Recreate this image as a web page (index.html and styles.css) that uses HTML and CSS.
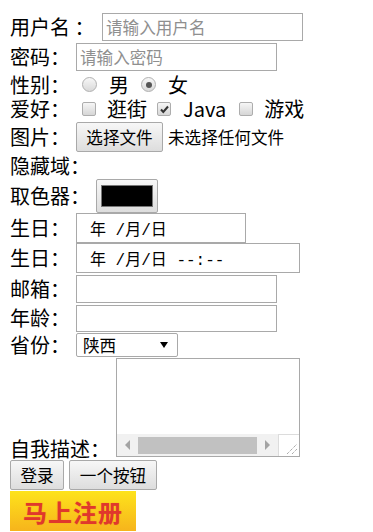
FILE: index.html
```html
<!DOCTYPE html>
<html lang="zh-CN">
<head>
    <meta charset="UTF-8">
    <meta name="viewport" content="width=device-width, initial-scale=1.0">
    <title>注册</title>
    <link rel="stylesheet" href="styles.css">
</head>
<body>
    <form class="reg">
        <div class="row r1">
            <span class="lbl w-user">用户名 ：</span>
            <input class="txt" type="text" placeholder="请输入用户名">
        </div>
        <div class="row r2">
            <span class="lbl">密码：</span>
            <input class="txt" type="text" placeholder="请输入密码">
        </div>
        <div class="row r3">
            <span class="lbl">性别：</span>
            <span class="radio"></span><span class="opt">男</span>
            <span class="radio on"></span><span class="opt">女</span>
        </div>
        <div class="row r4">
            <span class="lbl">爱好：</span>
            <span class="check"></span><span class="opt o1">逛街</span>
            <span class="check on c2"><svg width="11" height="11" viewBox="0 0 11 11"><path d="M2 5.5 L4.3 8 L9 2.5" fill="none" stroke="#333" stroke-width="2"/></svg></span><span class="opt o2">Java</span>
            <span class="check c3"></span><span class="opt o3">游戏</span>
        </div>
        <div class="row r5">
            <span class="lbl">图片：</span>
            <span class="btn file-btn">选择文件</span>
            <span class="file-name">未选择任何文件</span>
        </div>
        <div class="row r6">
            <span class="lbl">隐藏域：</span>
        </div>
        <div class="row r7">
            <span class="lbl w-color">取色器：</span>
            <span class="color"><span class="swatch"></span></span>
        </div>
        <div class="row r8">
            <span class="lbl">生日：</span>
            <span class="date">年 /月/日</span>
        </div>
        <div class="row r9">
            <span class="lbl">生日：</span>
            <span class="date wide">年 /月/日 --:--</span>
        </div>
        <div class="row r10">
            <span class="lbl">邮箱：</span>
            <input class="txt" type="text">
        </div>
        <div class="row r11">
            <span class="lbl">年龄：</span>
            <input class="txt short" type="text">
        </div>
        <div class="row r12">
            <span class="lbl">省份：</span>
            <span class="select">陕西<span class="caret"></span></span>
        </div>
        <div class="row r13">
            <span class="lbl w-desc">自我描述：</span>
            <div class="area">
                <div class="area-body"></div>
                <div class="hbar">
                    <span class="arr"><span class="tri left"></span></span>
                    <span class="track"><span class="thumb"></span></span>
                    <span class="arr"><span class="tri right"></span></span>
                    <span class="corner">
                        <svg width="21" height="22" viewBox="0 0 21 22"><path d="M9 20 L19 10 M14 20 L19 15" stroke="#888" stroke-width="1" stroke-dasharray="1 1"/></svg>
                    </span>
                </div>
            </div>
        </div>
        <div class="row r14">
            <span class="btn login">登录</span>
            <span class="btn other">一个按钮</span>
        </div>
        <div class="row r15">
            <span class="banner">马上注册</span>
        </div>
    </form>
</body>
</html>
```

FILE: styles.css
```css
body {
    margin: 0;
    padding: 12px 0 0 10px;
    font-family: "Noto Sans CJK SC", "Noto Sans", sans-serif;
    color: #000;
    background: #fff;
}

.row {
    display: flex;
    align-items: center;
}

.r1 { height: 30px; }
.r2 { height: 30px; }
.r3 { height: 25px; }
.r4 { height: 24px; }
.r5 { height: 32px; }
.r6 { height: 26px; }
.r7 { height: 34px; }
.r8 { height: 30px; }
.r9 { height: 30px; }
.r10 { height: 31px; }
.r11 { height: 28px; }
.r12 { height: 25px; }
.r13 { height: 103px; align-items: flex-end; }
.r14 { height: 31px; align-items: flex-start; }
.r15 { height: 40px; }

.lbl {
    flex-shrink: 0;
    width: 66px;
    font-size: 20px;
    line-height: 20px;
    white-space: pre;
}

.w-user { width: 92px; }
.w-color { width: 86px; }
.w-desc { width: 106px; margin-bottom: 1px; }

.txt {
    box-sizing: border-box;
    width: 201px;
    height: 28px;
    margin: 0;
    padding: 0 3px;
    border: 1px solid #a9a9a9;
    font-family: "Noto Sans CJK SC", sans-serif;
    font-size: 16.6px;
    outline: none;
}

.txt.short { height: 27px; }

.txt::placeholder {
    color: #8f8f8f;
}

/* radio and checkbox */
.radio {
    position: relative;
    box-sizing: border-box;
    width: 15px;
    height: 15px;
    margin-left: 6px;
    border: 1px solid #b0b0b0;
    border-radius: 50%;
    background: linear-gradient(#f7f7f7, #d9d9d9);
}

.radio + .opt + .radio { margin-left: 12px; }

.radio.on::after {
    content: "";
    position: absolute;
    left: 3.5px;
    top: 3.5px;
    width: 6px;
    height: 6px;
    border-radius: 50%;
    background: #555;
}

.opt {
    margin-left: 12px;
    font-size: 20px;
    line-height: 20px;
}

.check {
    box-sizing: border-box;
    display: flex;
    align-items: center;
    justify-content: center;
    width: 14px;
    height: 14px;
    margin-left: 6px;
    border: 1px solid #adadad;
    border-radius: 2px;
    background: linear-gradient(#f6f6f6, #d6d6d6);
}

.check.c2 { margin-left: 10px; }
.check.c3 { margin-left: 13px; }
.opt.o1 { margin-left: 11px; }
.opt.o2 { margin-left: 12px; }
.opt.o3 { margin-left: 11px; }

/* buttons */
.btn {
    box-sizing: border-box;
    display: flex;
    align-items: center;
    justify-content: center;
    height: 30px;
    border: 1px solid #a9a9a9;
    border-radius: 2px;
    background: linear-gradient(#f7f7f7, #dddddd);
    font-size: 16.6px;
}

.file-btn { width: 87px; }

.file-name {
    margin-left: 5px;
    font-size: 16.6px;
}

.login { width: 54px; }
.other { width: 88px; margin-left: 5px; }

.color {
    box-sizing: border-box;
    display: flex;
    align-items: center;
    justify-content: center;
    width: 62px;
    height: 34px;
    border: 1px solid #a9a9a9;
    border-radius: 2px;
    background: linear-gradient(#f7f7f7, #dddddd);
}

.swatch {
    width: 50px;
    height: 20px;
    border: 1px solid #777;
    background: #000;
}

.date {
    box-sizing: border-box;
    display: flex;
    align-items: center;
    width: 170px;
    height: 30px;
    padding-left: 13px;
    border: 1px solid #a9a9a9;
    font-family: "Liberation Mono", "Noto Sans CJK SC", monospace;
    font-size: 16px;
    white-space: pre;
}

.date.wide { width: 224px; }

.select {
    box-sizing: border-box;
    display: flex;
    align-items: center;
    width: 102px;
    height: 24px;
    padding-left: 6px;
    border: 1px solid #a9a9a9;
    border-radius: 2px;
    font-size: 16.6px;
}

.caret {
    margin-left: auto;
    margin-right: 9px;
    border-left: 4px solid transparent;
    border-right: 4px solid transparent;
    border-top: 6px solid #000;
}

/* textarea look */
.area {
    box-sizing: border-box;
    display: flex;
    flex-direction: column;
    width: 184px;
    height: 99px;
    margin-bottom: 3px;
    border: 1px solid #a9a9a9;
    background: #fff;
}

.area-body { flex: 1; }

.hbar {
    display: flex;
    height: 22px;
}

.arr {
    display: flex;
    align-items: center;
    justify-content: center;
    width: 21px;
    background: #f1f1f1;
}

.tri {
    border-top: 5px solid transparent;
    border-bottom: 5px solid transparent;
}

.tri.left { border-right: 5px solid #a3a3a3; }
.tri.right { border-left: 5px solid #a3a3a3; }

.track {
    display: flex;
    align-items: center;
    width: 119px;
    background: #f1f1f1;
}

.thumb {
    width: 119px;
    height: 17px;
    background: #c1c1c1;
}

.corner {
    box-sizing: border-box;
    width: 21px;
    border-top: 1px solid #dcdcdc;
    border-left: 1px solid #dcdcdc;
    background: #fff;
}

.corner svg { display: block; margin: -1px 0 0 -1px; }

.banner {
    display: flex;
    align-items: center;
    justify-content: center;
    width: 126px;
    height: 40px;
    background: linear-gradient(#fee31b, #f6b41c);
    color: #e0382c;
    font-size: 24px;
    font-weight: bold;
    letter-spacing: 1px;
    text-shadow: 0 0 1px rgba(224, 56, 44, 0.4);
}
```
